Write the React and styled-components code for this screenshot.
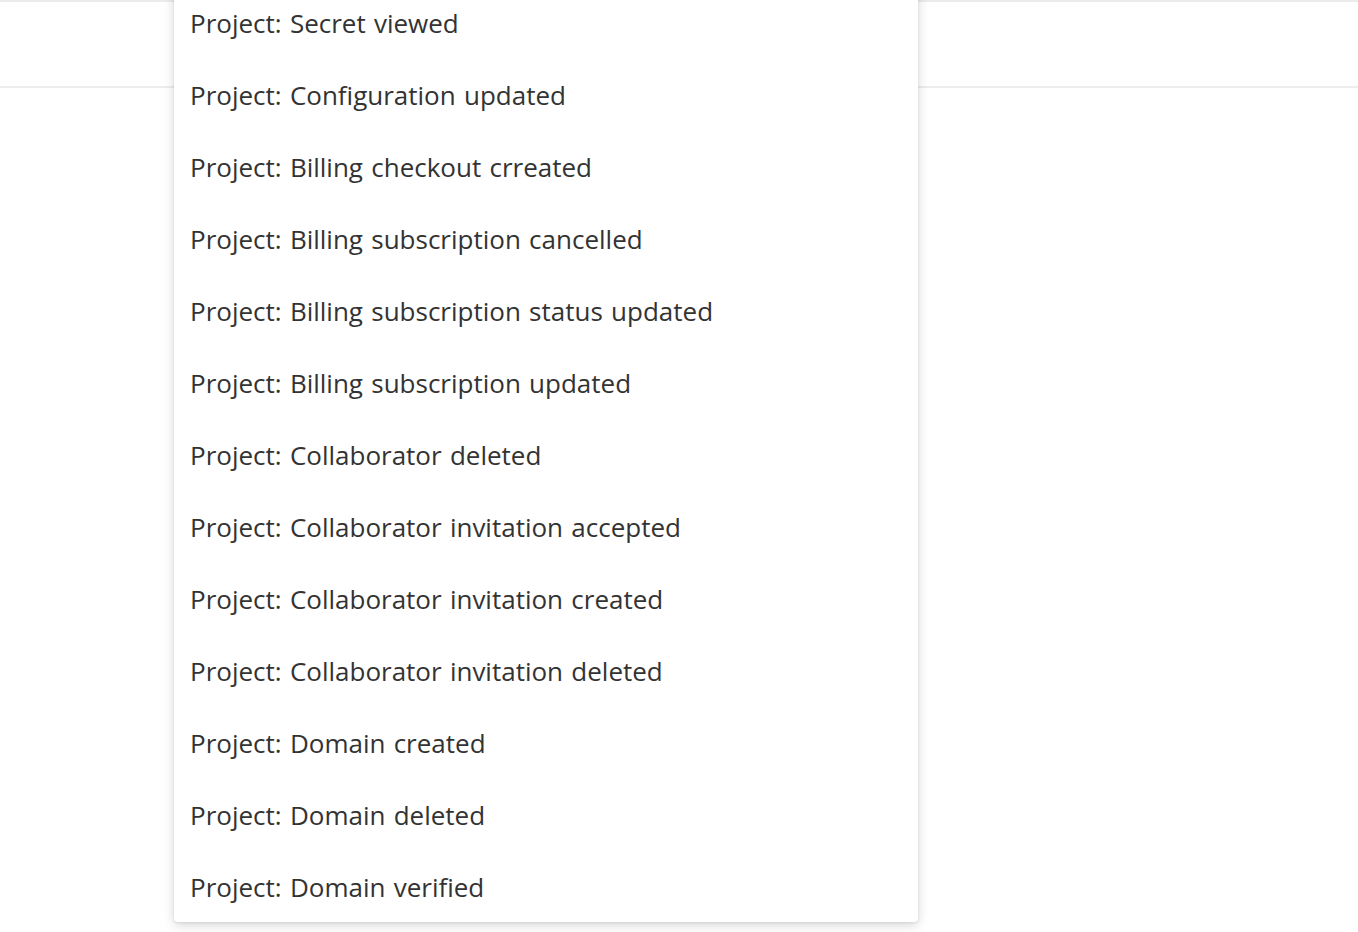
import React from "react";
import styled, { createGlobalStyle } from "styled-components";

const Global = createGlobalStyle`
  html, body { margin: 0; padding: 0; background: #ffffff; }
  body { font-family: "Open Sans", "Noto Sans", sans-serif; overflow: hidden; }
`;

const Page = styled.div`
  position: relative;
  width: 1358px;
  height: 932px;
  background: #ffffff;
  overflow: hidden;
`;

const Header = styled.header`
  height: 84px;
  border-top: 2px solid #ebebeb;
  border-bottom: 2px solid #ededed;
`;

const Menu = styled.ul`
  position: absolute;
  left: 174px;
  top: -14px;
  width: 744px;
  margin: 0;
  padding: 0;
  list-style: none;
  background: #ffffff;
  border-radius: 4px;
  box-shadow: 0 3px 12px rgba(0, 0, 0, 0.16), 0 1px 3px rgba(0, 0, 0, 0.08);
`;

const Item = styled.li`
  box-sizing: border-box;
  height: 72px;
  display: flex;
  align-items: center;
  padding: 2px 16px 0;
  font-size: 26px;
  word-spacing: 1.5px;
  color: #333333;
  white-space: nowrap;
`;

const items = [
  "Project: Secret viewed",
  "Project: Configuration updated",
  "Project: Billing checkout crreated",
  "Project: Billing subscription cancelled",
  "Project: Billing subscription status updated",
  "Project: Billing subscription updated",
  "Project: Collaborator deleted",
  "Project: Collaborator invitation accepted",
  "Project: Collaborator invitation created",
  "Project: Collaborator invitation deleted",
  "Project: Domain created",
  "Project: Domain deleted",
  "Project: Domain verified",
];

export default function App() {
  return (
    <Page>
      <Global />
      <Header />
      <Menu>
        {items.map((t) => (
          <Item key={t}>{t}</Item>
        ))}
      </Menu>
    </Page>
  );
}
